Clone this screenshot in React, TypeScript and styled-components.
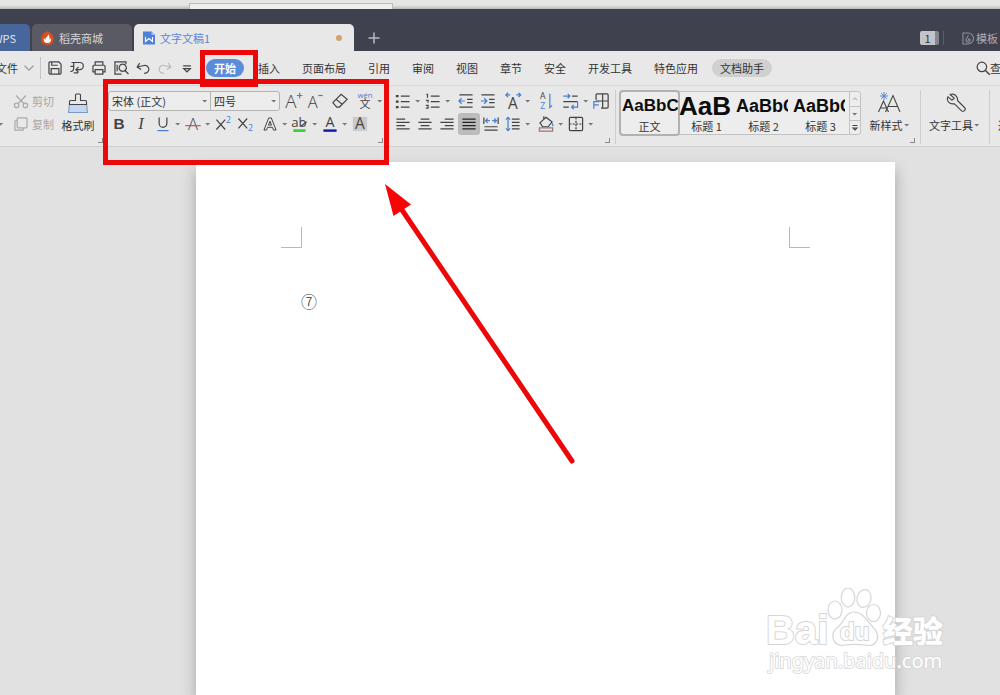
import React from "react";
import styled, { createGlobalStyle, css } from "styled-components";

const ink = "#444";
const blue = "#4a7fd0";
const red = "#ec0808";

const GlobalStyle = createGlobalStyle`
  * { box-sizing: border-box; }
  body {
    margin: 0;
    background: #e1e1e1;
    color: #333;
    font: 11px/16px "Noto Sans CJK SC", "Liberation Sans", sans-serif;
  }
  button, select { font: inherit; color: inherit; }
  button { border: 0; padding: 0; background: none; white-space: nowrap; }
`;

const Shell = styled.div`
  position: relative;
  min-height: 100vh;
  display: flex;
  flex-direction: column;
  overflow: hidden;
`;

/* ---------- title bar ---------- */

const BackdropStrip = styled.div`
  height: 9px;
  padding: 3px 0 0 189px;
  background: linear-gradient(#e6e6e6 5px, #b9bab6);
`;

const BackdropField = styled.div`
  width: 204px;
  height: 6px;
  border: 1px solid #bbb;
  border-bottom: 0;
  background: #eeeeea;
`;

const TitleBar = styled.header`
  display: flex;
  align-items: flex-end;
  height: 42px;
  background: #3f414f;
`;

const TabStrip = styled.nav`
  display: flex;
  flex: 1;
  gap: 2px;
  align-items: flex-end;
  min-width: 0;
`;

const DocTab = styled.button<{ $kind: "home" | "store" | "active" }>`
  display: flex;
  align-items: center;
  gap: 4px;
  height: 27px;
  flex: none;
  padding: 0 12px 0 8px;
  border-radius: 5px 5px 0 0;
  ${({ $kind }) =>
    $kind === "home" &&
    css`
      width: 30px;
      padding: 0 14px 0 0;
      justify-content: flex-end;
      border-radius: 0 5px 0 0;
      background: #47669b;
      color: #dfe5ef;
    `}
  ${({ $kind }) =>
    $kind === "store" &&
    css`
      width: 100px;
      background: #5a5a65;
      color: #d6d6da;
    `}
  ${({ $kind }) =>
    $kind === "active" &&
    css`
      width: 220px;
      background: #e8e8e8;
      color: #5b86d3;
    `}
`;

const UnsavedDot = styled.span`
  width: 6px;
  height: 6px;
  margin-left: auto;
  border-radius: 50%;
  background: #d4a272;
`;

const NewTab = styled.button`
  display: grid;
  place-items: center;
  width: 36px;
  height: 27px;
`;

const TitleTools = styled.div`
  display: flex;
  flex: none;
  align-items: center;
  width: 80px;
  height: 27px;
  overflow: hidden;
  color: #a9abb6;
`;

const WindowCount = styled.button`
  flex: none;
  width: 19px;
  height: 14px;
  border-right: 4px solid #85868f;
  border-radius: 2px;
  background: #c3c4ca;
  color: #33343e;
  line-height: 14px;
`;

const TitleDivider = styled.span`
  width: 1px;
  height: 14px;
  margin: 0 17px 0 4px;
  flex: none;
  background: #5b5d6a;
`;

const TemplateButton = styled.button`
  display: flex;
  align-items: center;
  flex: none;
  gap: 1px;
`;

/* ---------- menu bar ---------- */

const MenuBar = styled.div`
  display: flex;
  align-items: center;
  height: 34px;
  background: #e8e8e8;
`;

const FileMenu = styled.button`
  display: flex;
  align-items: center;
  flex: none;
  justify-content: flex-end;
  width: 41px;
  height: 22px;
  border-right: 1px solid #c4c4c4;
  margin-right: 3px;
  svg { flex: none; }
`;

const QuickTools = styled.div`
  display: flex;
  flex: none;
  margin-right: 8px;
`;

const MenuTabs = styled.nav`
  display: flex;
  gap: 6px;
  flex: 1;
  min-width: 0;
`;

const MenuTab = styled.button<{ $tone?: "current" | "helper" }>`
  flex: none;
  height: 18px;
  padding: 0 8px;
  border-radius: 9px;
  ${({ $tone }) => $tone === "current" && css`background: #5b8cdc; color: #fff; font-weight: 700;`}
  ${({ $tone }) => $tone === "helper" && css`background: #d0d0d0;`}
`;

const SearchButton = styled.button`
  display: flex;
  align-items: center;
  justify-content: flex-start;
  flex: none;
  width: 28px;
  overflow: hidden;
  svg { flex: none; margin-right: -4px; }
`;

/* ---------- ribbon ---------- */

const Ribbon = styled.section`
  display: flex;
  height: 62px;
  padding-top: 4px;
  border-top: 1px solid #d9d9d9;
  border-bottom: 1px solid #cfcfcf;
  background: #e8e8e8;
  overflow: hidden;
`;

const Group = styled.div<{ $divided?: boolean; $pad?: string }>`
  position: relative;
  display: flex;
  flex: none;
  align-items: flex-start;
  padding: ${({ $pad }) => $pad ?? "0 4px"};
  margin-bottom: 2px;
  border-right: ${({ $divided }) => ($divided ? "1px solid #cdcdcd" : "0")};
`;

const Rows = styled.div`
  display: flex;
  flex-direction: column;
  gap: 1px;
`;

const Row = styled.div`
  display: flex;
  gap: 3px;
  height: 22px;
  align-items: center;
`;

const Cluster = styled.div`
  display: flex;
`;

const ToolButton = styled.button<{ $pressed?: boolean }>`
  display: flex;
  align-items: center;
  flex: none;
  height: 22px;
  border-radius: 3px;
  background: ${({ $pressed }) => ($pressed ? "#bcbcbc" : "none")};
`;

const ClipboardButton = styled(ToolButton)`
  color: #a6a6a6;
`;

const PasteCaret = styled(ToolButton)`
  width: 10px;
  margin-top: 23px;
  svg { margin-left: -3px; }
`;

const LargeButton = styled.button`
  display: flex;
  flex: none;
  flex-direction: column;
  align-items: center;
  padding-top: 1px;
`;

const LargeLabel = styled.span`
  display: flex;
  align-items: center;
  height: 18px;
`;

const Launcher = styled.button`
  position: absolute;
  right: 5px;
  bottom: 1px;
  width: 5px;
  height: 5px;
  border: solid #8a8a8a;
  border-width: 0 1px 1px 0;
`;

const ComboPair = styled.div`
  display: flex;
  width: 172px;
  height: 20px;
  margin-right: -1px;
  border: 1px solid #b4b4b4;
  border-radius: 3px;
  background: #ededed;
`;

const ComboLabel = styled.label<{ $width: number }>`
  display: flex;
  align-items: center;
  width: ${({ $width }) => $width}px;
  & + & { border-left: 1px solid #b4b4b4; }
  svg { flex: none; margin: 0 1px 0 -9px; pointer-events: none; }
`;

const Combo = styled.select`
  flex: 1;
  width: 0;
  height: 18px;
  padding: 0 0 0 3px;
  border: 0;
  background: none;
  appearance: none;
`;

const Gallery = styled.div`
  display: flex;
  height: 44px;
  margin: 1px 2px 0 0;
  border: 1px solid #c2c2c2;
  border-radius: 3px;
  background: #ededed;
`;

const StyleCard = styled.button<{ $selected?: boolean }>`
  display: flex;
  flex-direction: column;
  width: 57px;
  height: 42px;
  overflow: hidden;
  border-radius: 2px;
  box-shadow: ${({ $selected }) => ($selected ? "0 0 0 2px #b2b2b2" : "none")};
  text-align: center;
`;

const Sample = styled.span<{ $size: number }>`
  display: flex;
  align-items: center;
  width: ${({ $size }) => ($size === 18 ? "53px" : "100%")};
  height: 28px;
  padding-left: 1px;
  overflow: hidden;
  color: #0d0d0d;
  font: 700 ${({ $size }) => $size}px/28px "Liberation Sans", sans-serif;
`;

const SampleName = styled.span`
  width: 100%;
  line-height: 12px;
`;

const GalleryScroll = styled.div`
  display: grid;
  grid-template-rows: repeat(3, 1fr);
  width: 11px;
  border-left: 1px solid #c2c2c2;
  button { display: grid; place-items: center; overflow: hidden; }
  button + button { border-top: 1px solid #c2c2c2; }
`;

/* ---------- document ---------- */

const Workspace = styled.main`
  display: flex;
  flex: 1;
  padding: 15px 105px 0 196px;
  background: #e1e1e1;
`;

const Page = styled.article`
  flex: 1;
  min-width: 0;
  padding: 65px 85px;
  background: #fff;
  box-shadow: 0 8px 14px rgba(0, 0, 0, 0.27);
`;

const Margins = styled.div`
  display: flex;
  justify-content: space-between;
`;

const CropMark = styled.span<{ $side: "left" | "right" }>`
  width: 21px;
  height: 21px;
  border-bottom: 1px solid #b8b8b8;
  ${({ $side }) => ($side === "left" ? "border-right" : "border-left")}: 1px solid #b8b8b8;
`;

const Paragraph = styled.p`
  margin: 41px 20px 0;
  font-size: 16px;
  line-height: 24px;
  font-weight: 300;
`;

/* ---------- annotations over the window ---------- */

const Highlight = styled.div<{ $x: number; $y: number; $w: number; $h: number }>`
  position: absolute;
  left: ${({ $x }) => $x}px;
  top: ${({ $y }) => $y}px;
  width: ${({ $w }) => $w}px;
  height: ${({ $h }) => $h}px;
  border: 5px solid ${red};
  pointer-events: none;
`;

const ArrowLayer = styled.svg`
  position: absolute;
  left: 380px;
  top: 180px;
  pointer-events: none;
`;

const WatermarkLayer = styled.svg`
  position: absolute;
  right: 50px;
  bottom: 15px;
  pointer-events: none;
`;

/* ---------- icons ---------- */

const Icon = ({ children, size = 22, height }: { children: React.ReactNode; size?: number; height?: number }) => (
  <svg
    width={size}
    height={height ?? size}
    viewBox={size === 22 ? "1 1 20 20" : `0 0 ${size} ${height ?? size}`}
    fill="none"
    stroke={ink}
    strokeWidth="1.1"
    aria-hidden="true"
  >
    {children}
  </svg>
);

const Glyph = ({ x, y, size, fill = ink, weight = 400, children, family = "Open Sans", italic }: {
  x: number; y: number; size: number; fill?: string; weight?: number; family?: string; italic?: boolean; children: string;
}) => (
  <text
    x={x}
    y={y}
    fontSize={size}
    fontWeight={weight}
    fontStyle={italic ? "italic" : undefined}
    fontFamily={`"${family}", "Noto Sans CJK SC", sans-serif`}
    fill={fill}
    stroke="none"
    textAnchor="middle"
  >
    {children}
  </text>
);

const Caret = () => (
  <svg width="8" height="8" viewBox="0 0 8 8" aria-hidden="true">
    <path d="M1.2 3h5L3.7 5.6z" fill="#777" />
  </svg>
);

const icons = {
  chevron: <path d="M7 9l4 4 4-4" stroke="#999" />,
  save: <path d="M5.5 6.5a1 1 0 0 1 1-1h8l2 2v8a1 1 0 0 1-1 1h-9a1 1 0 0 1-1-1zM8 5.5v3h5.5M7.5 16.5v-5h7v5" />,
  convert: <path d="M6 6h7.500a3 3 0 0 1 0 6.500H10M5 9.500h3.500M8 6v5.500a2.500 2.500 0 0 1-3 2.500M12.500 10L10 12.500l2.500 2.500M8 15.500h4" />,
  print: <path d="M7.500 8.500v-3h7v3M7.500 14.500h-2v-5a1 1 0 0 1 1-1h9a1 1 0 0 1 1 1v5h-2M7.500 12.500h7v4h-7z" />,
  preview: <path d="M15.500 7.500v-2h-10v11h6M12.500 7.500a3.300 3.300 0 1 0 .1 0M14.800 13.500l3 3M7.500 8v6" />,
  undo: <path d="M9 6L6 9l3 3M6 9h6.500a3.500 3.500 0 0 1 0 7H11" transform="rotate(-12 11 11)" />,
  redo: <path d="M13 6l3 3-3 3M16 9H9.500a3.500 3.500 0 0 0 0 7H11" transform="rotate(12 11 11)" stroke="#bbb" />,
  more: <path d="M7.500 9h7M8 11.500h6l-3 3z" />,
  search: <><circle cx="10" cy="10" r="4.300" /><path d="M13.200 13.200l4 4" strokeWidth="1.400" /></>,
  cut: <g stroke="#aaa"><circle cx="7" cy="15" r="2" /><circle cx="15" cy="15" r="2" /><path d="M8.200 13.500L15.500 6M13.800 13.500L6.500 6" /></g>,
  copy: <path d="M8.500 5.500h7a1 1 0 0 1 1 1v7a1 1 0 0 1-1 1h-7a1 1 0 0 1-1-1v-7a1 1 0 0 1 1-1zM7.500 8h-1a1 1 0 0 0-1 1v7.500h7.500v-2" stroke="#aaa" />,
  eraser: <path d="M4.500 12.500l7.500-7.500 5.500 4.500-7 7H8zM7.500 9.500l5.500 4.500" />,
  growFont: <><Glyph x={9} y={17} size={17} weight={300}>A</Glyph><path d="M14.500 6h5M17 3.500v5" stroke={blue} /></>,
  shrinkFont: <><Glyph x={9} y={17} size={15} weight={300}>A</Glyph><path d="M14 6h4" stroke={blue} /></>,
  pinyin: <><Glyph x={11} y={8} size={7} fill={blue}>wén</Glyph><Glyph x={11} y={17} size={10}>文</Glyph></>,
  bold: <Glyph x={11} y={16} size={14} weight={700} family="Liberation Sans">B</Glyph>,
  italic: <Glyph x={11} y={16} size={15} italic family="Liberation Serif">I</Glyph>,
  underline: <><path d="M7.500 5v5.500a3.500 3.500 0 0 0 7 0V5" /><path d="M6 17h10" stroke={blue} /></>,
  strike: <><Glyph x={11} y={16} size={15} weight={300}>A</Glyph><path d="M4 12.500h14" stroke="#c55" /></>,
  superscript: <><path d="M5 7l8 9M13 7l-8 9" /><Glyph x={16} y={10} size={8} fill={blue}>2</Glyph></>,
  subscript: <><path d="M5 6l8 9M13 6l-8 9" /><Glyph x={16} y={17} size={8} fill={blue}>2</Glyph></>,
  outlineA: <path d="M9.800 5.500h2.400l4.300 11h-2.300l-1-2.500H8.800l-1 2.500H5.500zM11 8.500l-1.400 3.500h2.800z" strokeLinejoin="round" strokeWidth="0.900" />,
  highlight: <><Glyph x={10} y={14} size={12}>ab</Glyph><path d="M12 13l5-4" /><path d="M5 17h11" stroke="#36d436" strokeWidth="2.500" /></>,
  fontColor: <><Glyph x={11} y={14} size={13}>A</Glyph><path d="M5 17h12" stroke="#1018a8" strokeWidth="2.200" /></>,
  shading: <><path d="M4.500 4.500h13v13h-13z" fill="#cbcbcb" stroke="none" /><Glyph x={11} y={16} size={14}>A</Glyph></>,
  bullets: <><path d="M9 6.500h8M9 11.500h8M9 16.500h8" /><path d="M4.500 6.500h2.500M4.500 11.500h2.500M4.500 16.500h2.500" strokeWidth="2" /></>,
  numbers: <><path d="M9 6.500h8M9 11.500h8M9 16.500h8" /><path d="M5 5h1v3M4.500 10.500h2v2M4.500 15h2v2.500h-2" /></>,
  outdent: <><path d="M5 5.500h12M12 9.500h5M12 12.500h5M5 16.500h12" /><path d="M10 11H4.500M7 8.500L4.500 11 7 13.500" stroke={blue} /></>,
  indent: <><path d="M5 5.500h12M12 9.500h5M12 12.500h5M5 16.500h12" /><path d="M4.500 11H10M7.500 8.500L10 11l-2.500 2.500" stroke={blue} /></>,
  textWidth: <><Glyph x={11} y={18} size={14}>A</Glyph><path d="M8.500 5.500H4.500M6.500 3.500l-2 2 2 2M14 5.500h4M16 3.500l2 2-2 2" stroke={blue} /></>,
  sort: <><Glyph x={8} y={9} size={8}>A</Glyph><Glyph x={8} y={18} size={8} fill={blue}>Z</Glyph><path d="M14.500 4.500v12.500l2-2" stroke={blue} /></>,
  tabs: <><path d="M12 6.500h5M4 11.500h13M4 16.500h5" /><path d="M4 6.500h6M8 4.500l2 2-2 2M17 12v4.500h-5M13.500 14.500l-2 2 2 2" stroke={blue} /></>,
  tableTool: <><path d="M6.500 10V5.500a1 1 0 0 1 1-1h9a1 1 0 0 1 1 1v11a1 1 0 0 1-1 1H11M12.500 4.500v13M6.500 11h11" /><path d="M4.500 18v-6.500h5M4.500 14.500H9" stroke={blue} /></>,
  left: <path d="M5 6.500h8M5 9.500h12M5 12.500h8M5 15.500h12" />,
  center: <path d="M7 6.500h8M5 9.500h12M7 12.500h8M5 15.500h12" />,
  right: <path d="M9 6.500h8M5 9.500h12M9 12.500h8M5 15.500h12" />,
  justify: <path d="M5 6.500h12M5 9.500h12M5 12.500h12M5 15.500h12" stroke="#222" />,
  distribute: <><path d="M4.500 5v6M17.500 5v6M5 13.500h12M5 16.500h12" /><path d="M10 8H6M8 6L6 8l2 2M12 8h4M14 6l2 2-2 2" stroke={blue} /></>,
  lineSpacing: <><path d="M10 6.500h7M10 9.500h7M10 12.500h7M10 15.500h7" /><path d="M6.500 5v12M4.500 7l2-2 2 2M4.500 15l2 2 2-2" stroke={blue} /></>,
  fill: <><path d="M5.500 10L11 5l5.500 4-3.500 4.500H8zM9 7V4" /><path d="M16.500 10l1 3" stroke={blue} /><path d="M5 14.500h12v3H5z" stroke="#9a7777" /></>,
  borders: <><rect x="5" y="5" width="12" height="12" rx="1" /><path d="M11 5v12M5 11h12" strokeDasharray="2 1" /></>,
};

type IconName = keyof typeof icons;

const Tool = ({ icon, label, menu, pressed }: { icon: IconName; label: string; menu?: boolean; pressed?: boolean }) => (
  <ToolButton aria-label={label} aria-pressed={pressed} $pressed={pressed}>
    <Icon>{icons[icon]}</Icon>
    {menu && <Caret />}
  </ToolButton>
);

const quickTools: [IconName, string][] = [
  ["save", "保存"], ["convert", "输出为PDF"], ["print", "打印"], ["preview", "打印预览"],
  ["undo", "撤销"], ["redo", "恢复"], ["more", "自定义快速访问工具栏"],
];

const menuTabs: { name: string; tone?: "current" | "helper" }[] = [
  { name: "开始", tone: "current" }, { name: "插入" }, { name: "页面布局" }, { name: "引用" },
  { name: "审阅" }, { name: "视图" }, { name: "章节" }, { name: "安全" }, { name: "开发工具" },
  { name: "特色应用" }, { name: "文档助手", tone: "helper" },
];

const styleCards = [
  { sample: "AaBbC", size: 17, name: "正文" },
  { sample: "AaB", size: 26, name: "标题 1" },
  { sample: "AaBbC", size: 18, name: "标题 2" },
  { sample: "AaBbC", size: 18, name: "标题 3" },
];

const Watermark = () => (
  <WatermarkLayer width="190" height="100" viewBox="0 0 190 100" aria-label="Baidu 经验">
    <g fill="#fff" fillOpacity="0.8" stroke="#d6d6d6" strokeWidth="1.200">
      <ellipse cx="75" cy="30" rx="7" ry="9" />
      <ellipse cx="88" cy="17.500" rx="6.800" ry="9.500" />
      <ellipse cx="104" cy="18.500" rx="7" ry="9" transform="rotate(12 104 18.500)" />
      <ellipse cx="113.500" cy="33" rx="7" ry="8.500" />
      <path d="M94 32c9 0 12 8 18 14 5 5 7 9 5 14-2 6-8 6-13 5-7-1-12-1-19 0-6 1-11-1-12-7-1-5 2-9 6-12 6-6 7-14 15-14z" />
      <g style={{ paintOrder: "stroke" }} strokeWidth="2" fillOpacity="1">
        <text x="6" y="64" fontFamily="Liberation Sans" fontWeight="700" fontSize="40">Bai</text>
        <text x="80" y="60" fontFamily="Liberation Sans" fontWeight="700" fontSize="24">du</text>
        <text x="123" y="62" fontFamily="Noto Sans CJK SC" fontWeight="900" fontSize="30">经验</text>
        <text x="9" y="88" fontFamily="Noto Sans" fontSize="20" strokeWidth="1.600">jingyan.baidu.com</text>
      </g>
    </g>
  </WatermarkLayer>
);

export default function App() {
  return (
    <Shell>
      <GlobalStyle />
      <BackdropStrip><BackdropField /></BackdropStrip>
      <TitleBar>
        <TabStrip>
          <DocTab $kind="home">WPS</DocTab>
          <DocTab $kind="store">
            <svg width="15" height="16" viewBox="0 0 15 16" aria-hidden="true">
              <path d="M3 3.500L8 1l4 3 2 5-2 5-5 1.500L2 13 1 8z" fill="#dd4b20" />
              <path d="M8 4c1 2-3 3-2.500 6l-1.500-2c-1 3 1 5 3.500 5s4-2 3.500-5l-1.500 2C9.500 8 10 6 8 4z" fill="#fff" />
            </svg>
            稻壳商城
          </DocTab>
          <DocTab $kind="active" aria-current="page">
            <svg width="14" height="16" viewBox="0 0 14 16" aria-hidden="true">
              <path d="M1 1.500h8.500L13 5v9.500H1z" fill="#4d80d8" />
              <path d="M9.500 1.500V5H13z" fill="#a9c2ee" />
              <path d="M3.500 7v4.500L7 8.500l3.500 3V7" fill="none" stroke="#fff" strokeWidth="1.200" />
            </svg>
            文字文稿1
            <UnsavedDot />
          </DocTab>
          <NewTab aria-label="新建">
            <Icon size={12}><path d="M6 .5v11M.5 6h11" stroke="#b9bac4" strokeWidth="1.500" /></Icon>
          </NewTab>
        </TabStrip>
        <TitleTools>
          <WindowCount>1</WindowCount>
          <TitleDivider />
          <TemplateButton>
            <Icon size={14}>
              <path d="M2 2h5a5 5 0 0 1 0 11H2zM7 4c1 2-2 2-2 5s4 3 4 0c0-2-2-1-2 1" stroke="#8f919d" />
            </Icon>
            模板
          </TemplateButton>
        </TitleTools>
      </TitleBar>

      <MenuBar>
        <FileMenu>文件<Icon>{icons.chevron}</Icon></FileMenu>
        <QuickTools>
          {quickTools.map(([icon, label]) => <Tool key={icon} icon={icon} label={label} />)}
        </QuickTools>
        <MenuTabs>
          {menuTabs.map((tab) => <MenuTab key={tab.name} $tone={tab.tone}>{tab.name}</MenuTab>)}
        </MenuTabs>
        <SearchButton><Icon>{icons.search}</Icon>查找</SearchButton>
      </MenuBar>

      <Ribbon>
        <Group $pad="0 6px 0 0">
          <PasteCaret aria-label="粘贴"><Caret /></PasteCaret>
          <Rows>
            <ClipboardButton><Icon>{icons.cut}</Icon>剪切</ClipboardButton>
            <ClipboardButton><Icon>{icons.copy}</Icon>复制</ClipboardButton>
          </Rows>
          <LargeButton>
            <Icon size={48} height={25}>
              <path d="M15.500 12.500l-1 9h19l-1-9z" fill="#c3d7f2" stroke="#7c9cc8" />
              <path d="M15.500 13.500v-3a1 1 0 0 1 1-1h5V4a1 1 0 0 1 1-1h3a1 1 0 0 1 1 1v5.500h5a1 1 0 0 1 1 1v3z" fill="#e8e8e8" />
            </Icon>
            <LargeLabel>格式刷</LargeLabel>
          </LargeButton>
          <Launcher aria-label="剪贴板" />
        </Group>

        <Group $pad="0 4px 0 0">
          <Rows>
            <Row>
              <ComboPair>
                <ComboLabel $width={101}>
                  <Combo aria-label="字体"><option>宋体 (正文)</option></Combo>
                  <Caret />
                </ComboLabel>
                <ComboLabel $width={69}>
                  <Combo aria-label="字号"><option>四号</option></Combo>
                  <Caret />
                </ComboLabel>
              </ComboPair>
              <Cluster>
                <Tool icon="growFont" label="增大字号" />
                <Tool icon="shrinkFont" label="减小字号" />
              </Cluster>
              <Tool icon="eraser" label="清除格式" />
              <Tool icon="pinyin" label="拼音指南" menu />
            </Row>
            <Row>
              <Cluster>
                <Tool icon="bold" label="加粗" />
                <Tool icon="italic" label="倾斜" />
                <Tool icon="underline" label="下划线" menu />
                <Tool icon="strike" label="删除线" menu />
                <Tool icon="superscript" label="上标" />
                <Tool icon="subscript" label="下标" />
              </Cluster>
              <Cluster>
                <Tool icon="outlineA" label="文字效果" menu />
                <Tool icon="highlight" label="突出显示" menu />
                <Tool icon="fontColor" label="字体颜色" menu />
                <Tool icon="shading" label="字符底纹" />
              </Cluster>
            </Row>
          </Rows>
          <Launcher aria-label="字体设置" />
        </Group>

        <Group $divided $pad="0 3px 0 4px">
          <Rows>
            <Row>
              <Cluster>
                <Tool icon="bullets" label="项目符号" menu />
                <Tool icon="numbers" label="编号" menu />
              </Cluster>
              <Cluster>
                <Tool icon="outdent" label="减少缩进" />
                <Tool icon="indent" label="增加缩进" />
              </Cluster>
              <Tool icon="textWidth" label="中文版式" menu />
              <Tool icon="sort" label="排序" />
              <Cluster>
                <Tool icon="tabs" label="制表位" menu />
                <Tool icon="tableTool" label="表格工具" />
              </Cluster>
            </Row>
            <Row>
              <Cluster>
                <Tool icon="left" label="左对齐" />
                <Tool icon="center" label="居中" />
                <Tool icon="right" label="右对齐" />
                <Tool icon="justify" label="两端对齐" pressed />
                <Tool icon="distribute" label="分散对齐" />
                <Tool icon="lineSpacing" label="行距" menu />
              </Cluster>
              <Cluster>
                <Tool icon="fill" label="底纹颜色" menu />
                <Tool icon="borders" label="边框" menu />
              </Cluster>
            </Row>
          </Rows>
          <Launcher aria-label="段落设置" />
        </Group>

        <Group $divided $pad="0 3px 0 4px">
          <Gallery>
            {styleCards.map((card, i) => (
              <StyleCard key={card.name} $selected={i === 0}>
                <Sample $size={card.size}>{card.sample}</Sample>
                <SampleName>{card.name}</SampleName>
              </StyleCard>
            ))}
            <GalleryScroll>
              <button aria-label="上一行"><Icon size={8}><path d="M2 5l2-2 2 2" stroke="#bbb" /></Icon></button>
              <button aria-label="下一行"><Caret /></button>
              <button aria-label="更多样式"><Icon size={8}><path d="M1.500 1.500h5M2 4h4L4 6z" /></Icon></button>
            </GalleryScroll>
          </Gallery>
          <LargeButton>
            <Icon size={54} height={25}>
              <path d="M15.500 21l5-11 5 11M17.500 17h6M22.500 21L30 4.500 37 21M25 15.500h9.500" />
              <path d="M21 1v8M17 5h8M18.200 2.200l5.600 5.600M23.800 2.200l-5.600 5.600" stroke={blue} strokeWidth="0.900" />
            </Icon>
            <LargeLabel>新样式<Caret /></LargeLabel>
          </LargeButton>
          <Launcher aria-label="样式设置" />
        </Group>

        <Group $divided $pad="0 8px">
          <LargeButton>
            <Icon size={52} height={25}>
              <path
                d="M21 3.500c4-1.500 8 1.500 7.500 6l7 7a2.200 2.200 0 0 1-3.200 3.200l-7-7c-5 1-8-3-6.500-7l4 3.500 2.500-2z"
                strokeLinejoin="round"
              />
            </Icon>
            <LargeLabel>文字工具<Caret /></LargeLabel>
          </LargeButton>
        </Group>

        <Group $pad="0 8px">
          <LargeButton>
            <Icon size={22} height={25}>{null}</Icon>
            <LargeLabel>选择</LargeLabel>
          </LargeButton>
        </Group>
      </Ribbon>

      <Workspace>
        <Page>
          <Margins><CropMark $side="left" /><CropMark $side="right" /></Margins>
          <Paragraph>⑦</Paragraph>
        </Page>
      </Workspace>

      <Watermark />
      <Highlight $x={103} $y={79} $w={286} $h={86} />
      <Highlight $x={200} $y={50} $w={58} $h={37} />
      <ArrowLayer width="200" height="290" viewBox="0 0 200 290" aria-hidden="true">
        <path d="M20 27L192 281" stroke={red} strokeWidth="5" strokeLinecap="round" />
        <path d="M5 4L31 24.500 13.500 36z" fill="#f50505" />
      </ArrowLayer>
    </Shell>
  );
}
